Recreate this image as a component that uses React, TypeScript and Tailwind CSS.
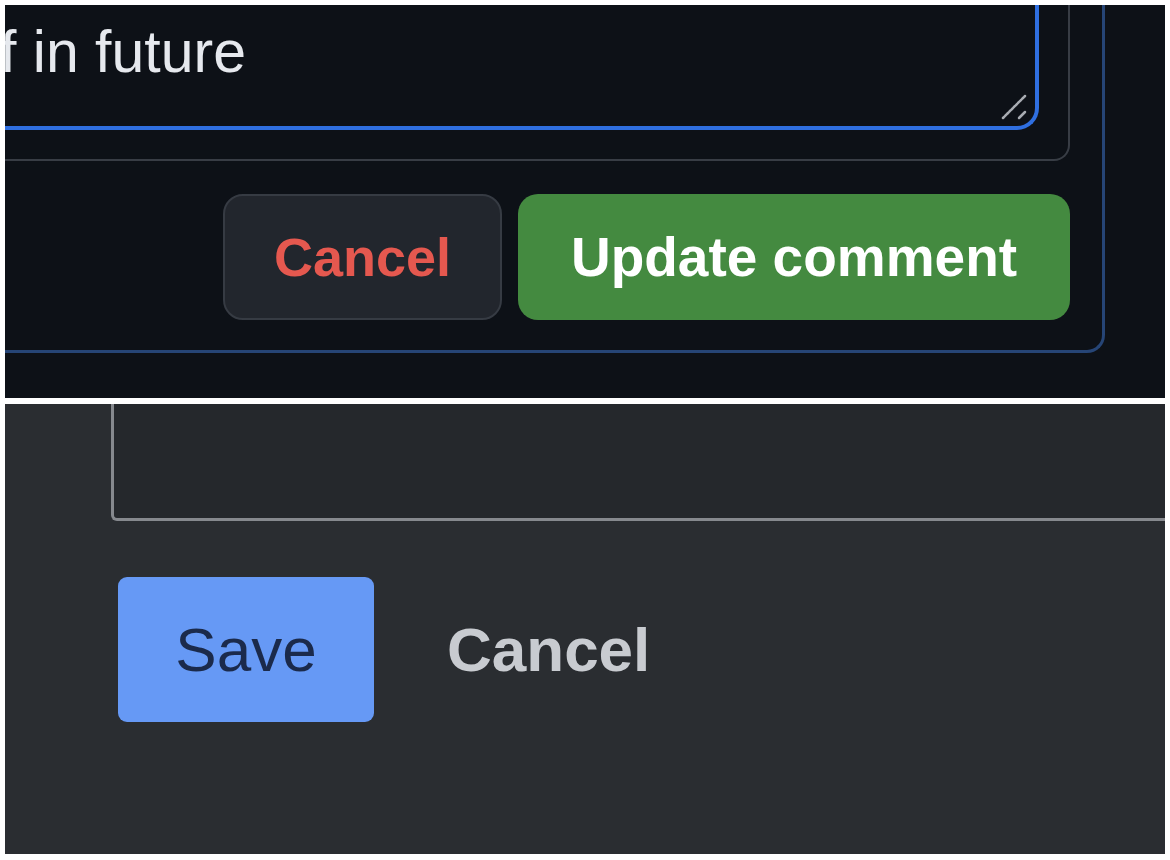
export default function App() {
  return (
    <div
      className="w-[1170px] h-[860px] bg-white pt-[5px]"
      style={{ fontFamily: '"Liberation Sans", Arial, sans-serif' }}
    >
      {/* Top crop: dark comment editor */}
      <div className="ml-[5px] w-[1160px] h-[393px] bg-[#0d1117] overflow-hidden flex flex-col justify-end pb-[45px]">
        <div className="shrink-0 -ml-[100px] mr-[60px] border-[3px] border-t-0 border-[#264576] rounded-br-[18px] px-[32px] pb-[30px]">
          <div className="border-2 border-t-0 border-[#383d45] rounded-b-[16px] px-[29px] pb-[29px]">
            <div className="relative h-[420px] border-4 border-t-0 border-[#2f6fe0] rounded-b-[22px] flex flex-col justify-end pl-[25px] pb-[44px]">
              <div className="text-[59px] leading-[60px] text-[#e6e9ee] whitespace-nowrap">f in future</div>
              <svg
                className="absolute right-[8px] bottom-[6px]"
                width="26"
                height="26"
                viewBox="0 0 26 26"
              >
                <line x1="2" y1="24" x2="24" y2="2" stroke="#a8acb2" strokeWidth="2.5" strokeLinecap="round" strokeDasharray="2 1" />
                <line x1="18" y1="24" x2="24" y2="18" stroke="#a8acb2" strokeWidth="2.5" strokeLinecap="round" />
              </svg>
            </div>
          </div>
          <div className="flex justify-end gap-[16px] mt-[33px]">
            <button className="w-[279px] h-[126px] rounded-[20px] border-2 border-[#363b43] bg-[#22262d] text-[#e5584f] text-[54px] font-semibold">
              Cancel
            </button>
            <button className="w-[552px] h-[126px] rounded-[20px] bg-[#448a40] text-white text-[55px] font-semibold">
              Update comment
            </button>
          </div>
        </div>
      </div>

      {/* Bottom crop: grey editor */}
      <div className="ml-[5px] mt-[6px] w-[1160px] h-[450px] bg-[#2a2d31] overflow-hidden">
        <div className="ml-[106px] -mr-[20px] h-[117px] border-l-[3px] border-b-[3px] border-[#86898e] rounded-bl-[6px] bg-[#25282c]" />
        <div className="flex items-center mt-[56px] ml-[113px]">
          <button className="w-[256px] h-[145px] rounded-[9px] bg-[#6699f5] text-[#1b2a4b] text-[62px]">
            Save
          </button>
          <span className="ml-[73px] text-[62px] font-semibold text-[#c8cbd0]">Cancel</span>
        </div>
      </div>
    </div>
  );
}
